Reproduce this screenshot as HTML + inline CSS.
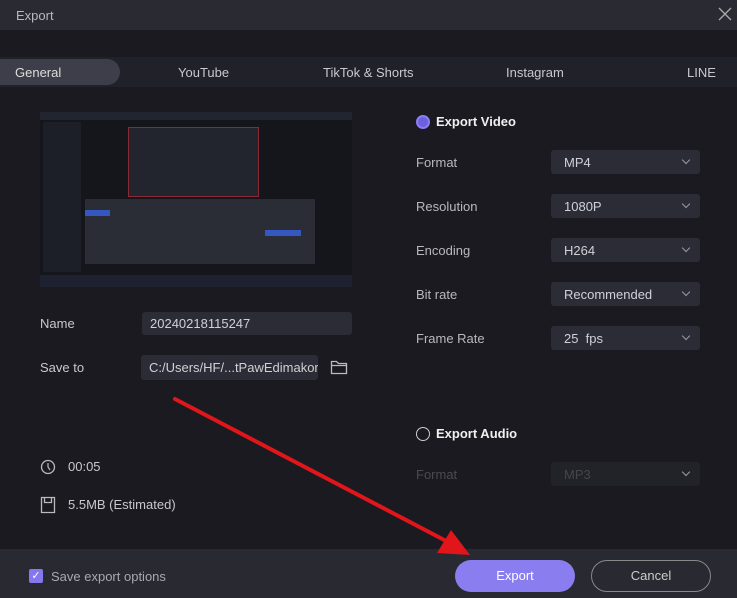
<!DOCTYPE html>
<html><head><style>
*{margin:0;padding:0;box-sizing:border-box}
body{width:737px;height:598px;background:#1b1a21;font-family:"Liberation Sans",sans-serif;color:#c8c8cf;font-size:13px;position:relative;overflow:hidden}
.a{position:absolute}
.sel{position:absolute;left:551px;width:149px;height:24px;background:#2c2c36;border-radius:3px;color:#d0d0d6;padding:5px 0 0 13px}
.sel:after{content:"";position:absolute;right:11px;top:7px;width:5px;height:5px;border-right:1.3px solid #9a9aa4;border-bottom:1.3px solid #9a9aa4;transform:rotate(45deg)}
.lbl{position:absolute;left:416px;color:#b8b8c0}
</style></head><body>
<div class="a" style="left:0;top:0;width:737px;height:30px;background:#2a2a33"></div>
<div class="a" style="left:16px;top:8px;color:#b8b8c0">Export</div>
<svg class="a" style="left:718px;top:7px" width="14" height="14"><path d="M1 1L13 13M13 1L1 13" stroke="#aaa" stroke-width="1.3"/></svg>
<div class="a" style="left:0;top:57px;width:737px;height:30px;background:#212129"></div>
<div class="a" style="left:0;top:59px;width:120px;height:26px;background:#3e3e4b;border-radius:0 13px 13px 0"></div>
<div class="a" style="left:15px;top:65px;color:#ddd">General</div>
<div class="a" style="left:178px;top:65px">YouTube</div>
<div class="a" style="left:323px;top:65px">TikTok &amp; Shorts</div>
<div class="a" style="left:506px;top:65px">Instagram</div>
<div class="a" style="left:687px;top:65px">LINE</div>

<div class="a" style="left:40px;top:112px;width:312px;height:175px;background:#15161c;overflow:hidden">
 <div class="a" style="left:0;top:0;width:312px;height:8px;background:#202530"></div>
 <div class="a" style="left:3px;top:10px;width:38px;height:150px;background:#1c1f27"></div>
 <div class="a" style="left:88px;top:15px;width:131px;height:70px;border:1px solid #8a2a35;background:#22252e"></div>
 <div class="a" style="left:45px;top:87px;width:230px;height:65px;background:#2a2d36"></div>
 <div class="a" style="left:45px;top:98px;width:25px;height:6px;background:#3558c0"></div>
 <div class="a" style="left:225px;top:118px;width:36px;height:6px;background:#3558c0"></div>
 <div class="a" style="left:0;top:163px;width:312px;height:12px;background:#1e2230"></div>
</div>

<div class="a" style="left:40px;top:316px">Name</div>
<div class="a" style="left:142px;top:312px;width:210px;height:23px;background:#2c2c36;border-radius:3px;padding:4px 0 0 8px;color:#d0d0d6">20240218115247</div>
<div class="a" style="left:40px;top:360px">Save to</div>
<div class="a" style="left:141px;top:355px;width:177px;height:25px;background:#2c2c36;border-radius:3px;padding:5px 0 0 8px;color:#d0d0d6;white-space:nowrap;overflow:hidden">C:/Users/HF/...tPawEdimakor</div>
<svg class="a" style="left:330px;top:359px" width="18" height="16"><path d="M1.5 2.5h5l2 2h8v10h-15z M1.5 6.5h15" fill="none" stroke="#bbb" stroke-width="1.3"/></svg>
<svg class="a" style="left:40px;top:458px" width="16" height="18"><circle cx="8" cy="9" r="6.5" fill="none" stroke="#bbb" stroke-width="1.3"/><path d="M8 5v4l2 3" fill="none" stroke="#bbb" stroke-width="1.2"/></svg>
<div class="a" style="left:68px;top:459px">00:05</div>
<svg class="a" style="left:40px;top:496px" width="16" height="18"><path d="M1.5 1.5h13v15h-13z M4.5 1.5v5h7v-5" fill="none" stroke="#bbb" stroke-width="1.3"/></svg>
<div class="a" style="left:68px;top:497px">5.5MB (Estimated)</div>

<div class="a" style="left:416px;top:115px;width:14px;height:14px;border-radius:50%;border:2px solid #8b7ff0;background:#6c5fe0"></div>
<div class="a" style="left:436px;top:114px;font-weight:bold;color:#f0f0f0">Export Video</div>
<div class="lbl" style="top:155px">Format</div><div class="sel" style="top:150px">MP4</div>
<div class="lbl" style="top:199px">Resolution</div><div class="sel" style="top:194px">1080P</div>
<div class="lbl" style="top:243px">Encoding</div><div class="sel" style="top:238px">H264</div>
<div class="lbl" style="top:287px">Bit rate</div><div class="sel" style="top:282px">Recommended</div>
<div class="lbl" style="top:331px">Frame Rate</div><div class="sel" style="top:326px">25&nbsp;&nbsp;fps</div>
<div class="a" style="left:416px;top:427px;width:14px;height:14px;border-radius:50%;border:1.5px solid #ccc"></div>
<div class="a" style="left:436px;top:426px;font-weight:bold;color:#f0f0f0">Export Audio</div>
<div class="lbl" style="top:467px;color:#4a4a52">Format</div>
<div class="sel" style="top:462px;background:#222229;color:#45454d">MP3</div>

<div class="a" style="left:0;top:549px;width:737px;height:49px;background:#292931"></div>
<div class="a" style="left:29px;top:569px;width:14px;height:14px;background:#8577ee;border-radius:2px;color:#fff;font-size:11px;text-align:center;line-height:14px">✓</div>
<div class="a" style="left:51px;top:569px;color:#a8a8b0">Save export options</div>
<div class="a" style="left:455px;top:560px;width:120px;height:32px;background:#8a7df0;border-radius:16px;text-align:center;line-height:32px;color:#fff">Export</div>
<div class="a" style="left:591px;top:560px;width:120px;height:32px;border:1px solid #888;border-radius:16px;text-align:center;line-height:30px;color:#ccc">Cancel</div>
<svg class="a" style="left:0;top:0" width="737" height="598"><line x1="175" y1="399" x2="450" y2="543" stroke="#e0161a" stroke-width="4" stroke-linecap="round"/><path d="M470 555 L437 553 L451 530 Z" fill="#e0161a"/></svg>
</body></html>
